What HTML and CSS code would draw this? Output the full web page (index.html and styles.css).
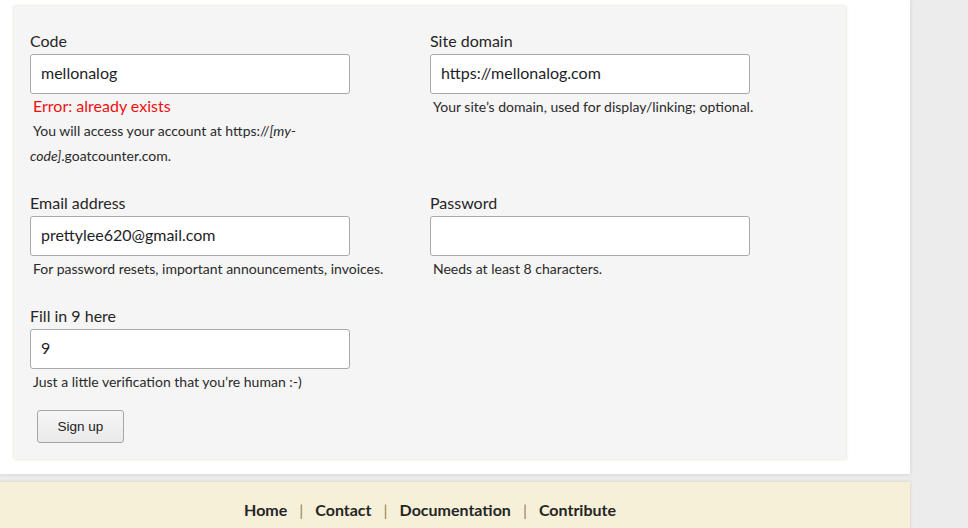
FILE: index.html
```html
<!DOCTYPE html>
<html lang="en">
<head>
<meta charset="utf-8">
<title>Sign up</title>
<link rel="stylesheet" href="styles.css">
</head>
<body>
<div class="page">
  <form class="card">
    <div class="grid">
      <div class="field">
        <label class="label" for="code">Code</label>
        <input class="input" id="code" type="text" value="mellonalog">
        <div class="err">Error: already exists</div>
        <div class="help">You will access your account at https://<i>[my-code]</i>.goatcounter.com.</div>
      </div>
      <div class="field">
        <label class="label" for="domain">Site domain</label>
        <input class="input" id="domain" type="text" value="https://mellonalog.com">
        <div class="help">Your site’s domain, used for display/linking; optional.</div>
      </div>
      <div class="field">
        <label class="label" for="email">Email address</label>
        <input class="input" id="email" type="text" value="prettylee620@gmail.com">
        <div class="help">For password resets, important announcements, invoices.</div>
      </div>
      <div class="field">
        <label class="label" for="pw">Password</label>
        <input class="input" id="pw" type="password" value="">
        <div class="help">Needs at least 8 characters.</div>
      </div>
      <div class="field">
        <label class="label" for="nine">Fill in 9 here</label>
        <input class="input" id="nine" type="text" value="9">
        <div class="help">Just a little verification that you’re human :-)</div>
      </div>
    </div>
    <button class="btn" type="button">Sign up</button>
  </form>
</div>
<footer class="footer">
  <nav class="links">
    <a href="#">Home</a><span class="sep">|</span><a href="#">Contact</a><span class="sep">|</span><a href="#">Documentation</a><span class="sep">|</span><a href="#">Contribute</a>
  </nav>
</footer>
</body>
</html>
```

FILE: styles.css
```css
html, body {
  margin: 0;
  padding: 0;
}
body {
  background: #ececec;
  font-family: Lato, "Noto Sans", sans-serif;
  color: #252525;
  font-size: 16px;
}
.page {
  width: 910px;
  background: #fff;
  padding: 6px 0 15px;
  box-sizing: border-box;
  box-shadow: 0 0 4px rgba(0, 0, 0, 0.14);
}
.card {
  display: block;
  margin: 0 0 0 14px;
  width: 832px;
  box-sizing: border-box;
  background: #f5f5f5;
  padding: 22px 16px 16px;
  box-shadow: 0 0 3px #dcd8c0;
}
.grid {
  display: grid;
  grid-template-columns: 380px 380px;
  column-gap: 20px;
  row-gap: 22px;
  align-items: start;
}
.label {
  display: block;
  line-height: 26px;
  font-size: 16px;
  color: #252525;
}
.input {
  display: block;
  width: 320px;
  height: 40px;
  box-sizing: border-box;
  margin: 0;
  border: 1px solid #a9a9a9;
  border-radius: 3px;
  background: #fff;
  padding: 0 10px 3px;
  font-family: Lato, "Noto Sans", sans-serif;
  font-size: 16px;
  color: #1e1e28;
}
.err {
  color: #ee1111;
  font-size: 16px;
  line-height: 24px;
  text-indent: 3px;
}
.help {
  font-size: 14px;
  line-height: 25px;
  text-indent: 3px;
  color: #2a2a2a;
}
.help i {
  font-style: italic;
}
.btn {
  display: block;
  margin: 16px 0 0 7px;
  width: 87px;
  height: 33px;
  box-sizing: border-box;
  border: 1px solid #a6a6a6;
  border-radius: 3px;
  background: linear-gradient(#f6f6f6, #e9e9e9);
  font-family: "Liberation Sans", Arial, sans-serif;
  font-size: 13.5px;
  color: #222;
  padding: 0;
}
.footer {
  margin-top: 8px;
  width: 910px;
  background: #f6f0d9;
  box-shadow: 0 0 3px rgba(120, 110, 70, 0.25);
  padding: 16px 64px 16px 14px;
  box-sizing: border-box;
}
.links {
  display: flex;
  justify-content: center;
  line-height: 24px;
}
.links a {
  color: #252525;
  font-weight: bold;
  font-size: 16px;
  text-decoration: none;
}
.sep {
  color: #9a8050;
  padding: 0 12px;
  font-size: 16px;
}
```
